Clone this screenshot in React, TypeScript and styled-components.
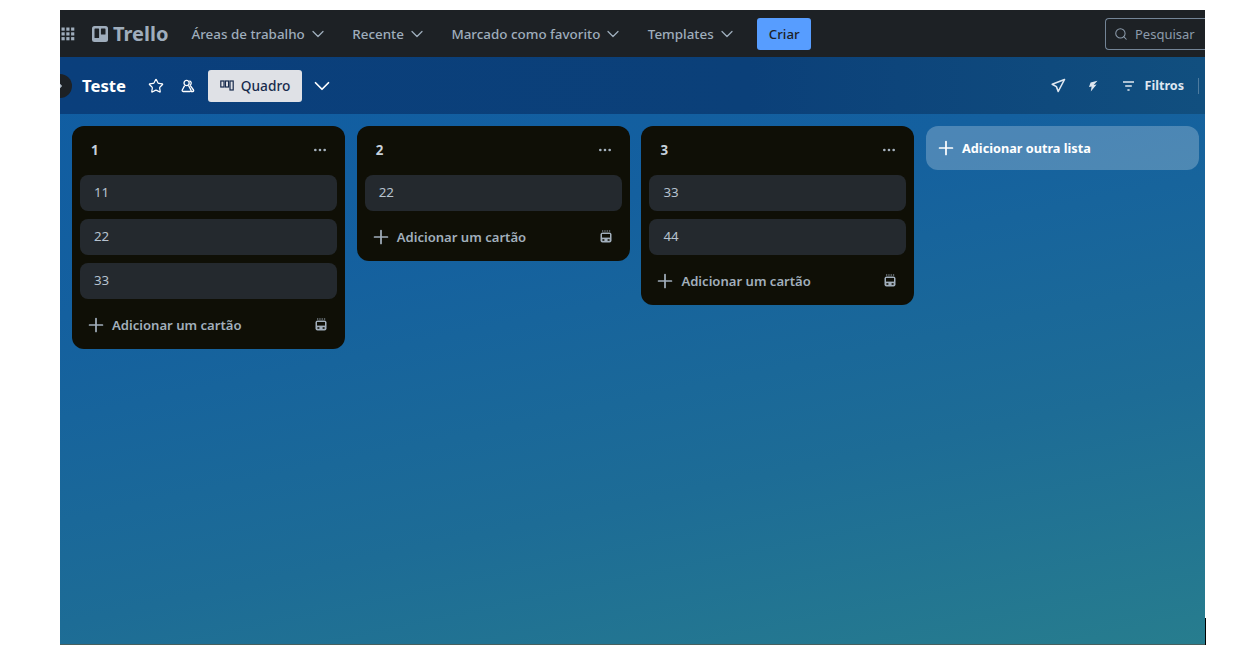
import styled, { createGlobalStyle } from "styled-components";
import { ChevronDown, ChevronRight, Ellipsis, Plus, Search, Star } from "lucide-react";

const GlobalStyle = createGlobalStyle`
  html, body {
    margin: 0;
    padding: 0;
    background: #fff;
    font-family: "Noto Sans", "Open Sans", sans-serif;
  }
`;

const Frame = styled.div`
  position: relative;
  width: 1145px;
  height: 635px;
  margin: 10px 0 0 60px;
  display: flex;
  flex-direction: column;
  background: linear-gradient(168deg, #0f5ca3 0%, #14609f 35%, #1d6c96 70%, #277d8e 100%);
  box-shadow: inset 0 -1px 0 #47605f;
  &::after {
    content: "";
    position: absolute;
    right: -1px;
    bottom: 0;
    width: 1px;
    height: 27px;
    background: #000;
  }
`;

const TopBar = styled.header`
  flex: 0 0 47px;
  display: flex;
  align-items: center;
  overflow: hidden;
  background: #1d2125;
  color: #9fadbc;
`;

const AppGrid = styled.svg`
  flex: none;
  width: 16px;
  height: 16px;
  color: #9fadbc;
`;

const Logo = styled.div`
  display: flex;
  align-items: center;
  gap: 5px;
  margin-left: 16px;
  margin-right: 23px;
  font-size: 20px;
  font-weight: 700;
  color: #9fadbc;
`;

const NavItem = styled.div`
  display: flex;
  align-items: center;
  gap: 3px;
  margin-right: 24.5px;
  font-size: 13.4px;
  font-weight: 500;
  white-space: nowrap;
`;

const CreateButton = styled.button`
  width: 54px;
  height: 32px;
  margin-left: -4px;
  padding: 0;
  border: 0;
  border-radius: 3px;
  background: #579dff;
  color: #1d2125;
  font: 500 13.3px "Noto Sans", sans-serif;
`;

const SearchBox = styled.div`
  display: flex;
  align-items: center;
  gap: 7px;
  width: 100px;
  height: 32px;
  margin-left: auto;
  padding-left: 8px;
  box-sizing: border-box;
  flex: none;
  border: 1px solid #738496;
  border-right: 0;
  border-radius: 4px 0 0 4px;
  font-size: 13px;
  color: #8c9bab;
`;

const BoardBar = styled.div`
  flex: 0 0 57px;
  display: flex;
  align-items: center;
  overflow: hidden;
  background: linear-gradient(90deg, #0a3f7c 0%, #0b4079 60%, #114f7f 100%);
  color: #fff;
`;

const Avatar = styled.div`
  flex: none;
  display: flex;
  align-items: center;
  justify-content: center;
  width: 24px;
  height: 24px;
  margin-left: -12px;
  border-radius: 50%;
  background: #1d2125;
  color: #b6c2cf;
`;

const BoardTitle = styled.h1`
  margin: 0 0 0 10px;
  font-size: 16.7px;
  font-weight: 700;
  color: #fff;
`;

const BarIcon = styled.span<{ $gap: number }>`
  display: flex;
  align-items: center;
  margin-left: ${(p) => p.$gap}px;
`;

const ViewButton = styled.div`
  display: flex;
  align-items: center;
  justify-content: center;
  gap: 7px;
  width: 94px;
  height: 32px;
  margin-left: 13px;
  border-radius: 3px;
  background: #dfe1e6;
  color: #172b4d;
  font-size: 13.7px;
  font-weight: 500;
`;

const BarRight = styled.div`
  display: flex;
  align-items: center;
  margin-left: auto;
  margin-right: 6px;
  font-size: 12.6px;
  font-weight: 700;
  color: #dfe7f0;
`;

const BarAction = styled.span<{ $gap: number }>`
  display: flex;
  align-items: center;
  gap: 10px;
  margin-right: ${(p) => p.$gap}px;
`;

const Divider = styled.span`
  width: 1px;
  height: 16px;
  background: rgba(255, 255, 255, 0.25);
`;

const Board = styled.main`
  flex: 1;
  display: flex;
  align-items: flex-start;
  gap: 11.7px;
  padding: 12px;
`;

const List = styled.section`
  flex: none;
  width: 273px;
  box-sizing: border-box;
  padding: 0 8px;
  border-radius: 12px;
  background: #0f0f06;
  color: #b6c2cf;
`;

const ListHeader = styled.div`
  height: 48.5px;
  display: flex;
  align-items: center;
  justify-content: space-between;
  padding: 0 9px 0 11px;
  font-size: 13.3px;
  font-weight: 700;
  color: #c7d1db;
  svg {
    color: #a5b1bd;
  }
`;

const CardStack = styled.div`
  display: flex;
  flex-direction: column;
  gap: 8px;
`;

const Card = styled.div`
  height: 36px;
  display: flex;
  align-items: center;
  padding-left: 14px;
  padding-bottom: 1px;
  box-sizing: border-box;
  border-radius: 8px;
  background: #24292e;
  font-size: 13.3px;
  color: #b6c2cf;
`;

const AddCard = styled.div`
  height: 44px;
  margin-top: 4.5px;
  margin-bottom: 2px;
  display: flex;
  align-items: center;
  gap: 5px;
  padding: 0 9px 0 5px;
  font-size: 13.1px;
  font-weight: 600;
  color: #a2afbc;
`;

const Template = styled.svg`
  width: 14px;
  height: 14px;
  margin-left: auto;
`;

const AddList = styled.div`
  flex: none;
  width: 273px;
  height: 44px;
  box-sizing: border-box;
  display: flex;
  align-items: center;
  gap: 5px;
  padding-left: 9px;
  border-radius: 12px;
  background: rgba(255, 255, 255, 0.24);
  color: #fff;
  font-size: 12.7px;
  font-weight: 700;
`;

const lists = [
  { title: "1", cards: ["11", "22", "33"] },
  { title: "2", cards: ["22"] },
  { title: "3", cards: ["33", "44"] },
];

const navItems = ["Áreas de trabalho", "Recente", "Marcado como favorito", "Templates"];

function GridIcon() {
  const dots = [1.5, 6.3, 11.1];
  return (
    <AppGrid viewBox="0 0 16 16" fill="currentColor">
      {dots.map((y) => dots.map((x) => <rect key={`${x}-${y}`} x={x} y={y} width="3.2" height="3.2" />))}
    </AppGrid>
  );
}

function TrelloMark() {
  return (
    <svg width="16" height="16" viewBox="0 0 16 16">
      <rect width="16" height="16" rx="2.5" fill="currentColor" />
      <rect x="2.5" y="2.5" width="4.6" height="9.5" rx="0.6" fill="#1d2125" />
      <rect x="8.9" y="2.5" width="4.6" height="6" rx="0.6" fill="#1d2125" />
    </svg>
  );
}

function TemplateIcon() {
  return (
    <Template viewBox="0 0 14 14" fill="none">
      <path d="M3 1h8.5" stroke="currentColor" strokeWidth="1" strokeDasharray="1.3 1" />
      <rect x="1.5" y="2.5" width="11" height="10" rx="2" fill="currentColor" />
      <rect x="3" y="4" width="8" height="3.6" fill="#0f0f06" />
      <rect x="3.4" y="9.2" width="2" height="1.6" fill="#0f0f06" />
      <rect x="8.6" y="9.2" width="2" height="1.6" fill="#0f0f06" />
    </Template>
  );
}

function BoardIcon() {
  return (
    <svg width="14" height="12" viewBox="0 0 14 12" fill="none" stroke="#172b4d" strokeWidth="1.2">
      <rect x="0.8" y="1" width="3.2" height="6" />
      <rect x="5.4" y="1" width="3.2" height="6" />
      <rect x="10" y="1" width="3.2" height="9" />
    </svg>
  );
}

function PeopleIcon() {
  return (
    <svg width="14" height="14" viewBox="0 0 14 14" fill="none" stroke="currentColor" strokeWidth="1.3" strokeLinejoin="round">
      <circle cx="5.6" cy="4" r="2.6" />
      <path d="M8.3 1.8a2.4 2.4 0 0 1 .8 4.4" />
      <path d="M3.6 6.6 1.3 11c-.4.8 0 1.5.8 1.5h7c.8 0 1.2-.7.8-1.5L7.6 6.6" />
      <path d="M9.2 6.4l3.3 4.6c.4.7.1 1.5-.7 1.5H10" />
    </svg>
  );
}

function RocketIcon() {
  return (
    <svg width="15" height="15" viewBox="0 0 15 15" fill="none" stroke="currentColor" strokeWidth="1.6" strokeLinejoin="round">
      <path d="M13.5 1.5 1.2 6.2l4.2 2.4 1.8 4.9z" />
    </svg>
  );
}

function BoltIcon() {
  return (
    <svg width="10" height="12" viewBox="0 0 10 12" fill="currentColor">
      <path d="M9.5 0.8 2.6 2.6 1 7l2.6-.4L2.8 11.5 8.6 4.6 5.7 5z" />
    </svg>
  );
}

function FilterIcon() {
  return (
    <svg width="13" height="12" viewBox="0 0 13 12" stroke="currentColor" strokeWidth="1.3">
      <path d="M1 2h11M3.2 6h6.6M5.4 10h2.2" />
    </svg>
  );
}

export default function App() {
  return (
    <>
      <GlobalStyle />
      <Frame>
        <TopBar>
          <GridIcon />
          <Logo>
            <TrelloMark />
            Trello
          </Logo>
          {navItems.map((item) => (
            <NavItem key={item}>
              {item}
              <ChevronDown size={20} strokeWidth={1.5} />
            </NavItem>
          ))}
          <CreateButton>Criar</CreateButton>
          <SearchBox>
            <Search size={14} strokeWidth={1.8} />
            Pesquisar
          </SearchBox>
        </TopBar>
        <BoardBar>
          <Avatar>
            <ChevronRight size={10} strokeWidth={3} />
          </Avatar>
          <BoardTitle>Teste</BoardTitle>
          <BarIcon $gap={22}>
            <Star size={16} strokeWidth={1.8} />
          </BarIcon>
          <BarIcon $gap={17}>
            <PeopleIcon />
          </BarIcon>
          <ViewButton>
            <BoardIcon />
            Quadro
          </ViewButton>
          <BarIcon $gap={7}>
            <ChevronDown size={26} strokeWidth={1.6} />
          </BarIcon>
          <BarRight>
            <BarAction $gap={22}>
              <RocketIcon />
            </BarAction>
            <BarAction $gap={24}>
              <BoltIcon />
            </BarAction>
            <BarAction $gap={14}>
              <FilterIcon />
              Filtros
            </BarAction>
            <Divider />
          </BarRight>
        </BoardBar>
        <Board>
          {lists.map((list) => (
            <List key={list.title}>
              <ListHeader>
                {list.title}
                <Ellipsis size={16} />
              </ListHeader>
              <CardStack>
                {list.cards.map((card) => (
                  <Card key={card}>{card}</Card>
                ))}
              </CardStack>
              <AddCard>
                <Plus size={22} strokeWidth={1.9} />
                Adicionar um cartão
                <TemplateIcon />
              </AddCard>
            </List>
          ))}
          <AddList>
            <Plus size={22} strokeWidth={1.9} />
            Adicionar outra lista
          </AddList>
        </Board>
      </Frame>
    </>
  );
}
